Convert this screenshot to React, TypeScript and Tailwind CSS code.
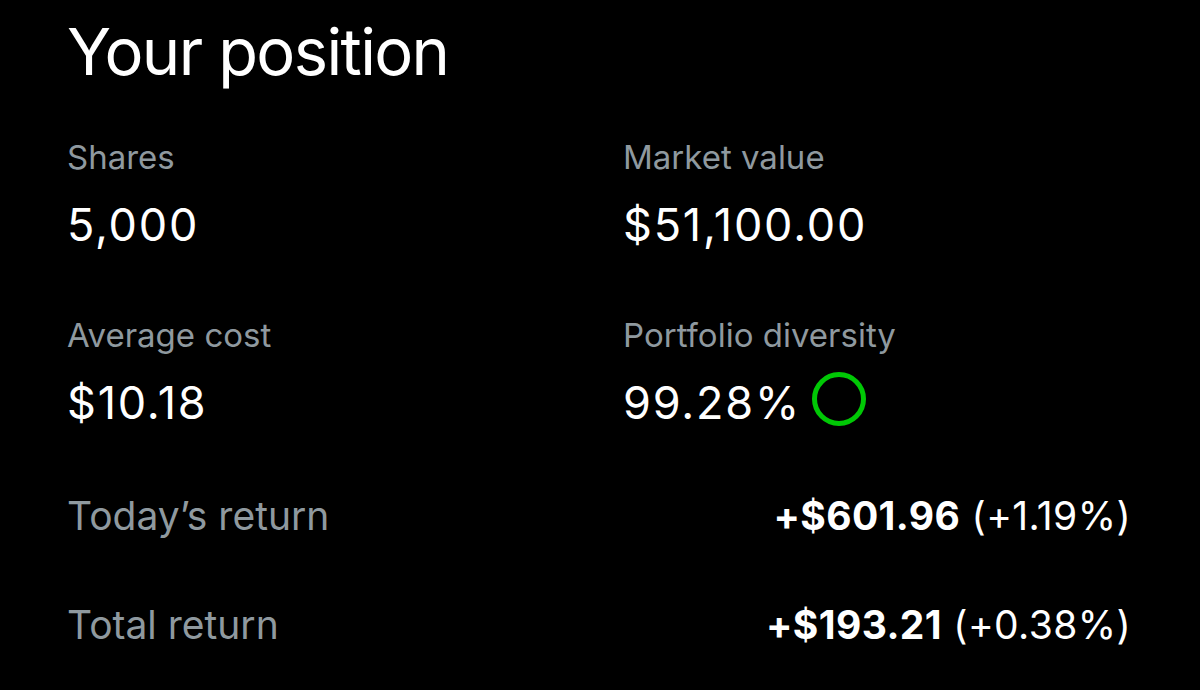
export default function App() {
  const stats = [
    [
      { label: "Shares", value: "5,000" },
      { label: "Market value", value: "$51,100.00" },
    ],
    [
      { label: "Average cost", value: "$10.18" },
      { label: "Portfolio diversity", value: "99.28%", ring: true },
    ],
  ];

  const returns = [
    { label: "Today’s return", amount: "+$601.96", pct: "(+1.19%)" },
    { label: "Total return", amount: "+$193.21", pct: "(+0.38%)" },
  ];

  return (
    <div
      className="h-[690px] w-[1200px] overflow-hidden bg-black pl-[67px] pr-[69px] pt-[16px] text-white"
      style={{ fontFamily: "Inter, 'Noto Sans', sans-serif" }}
    >
      <h1 className="text-[65px] leading-[72px] font-normal tracking-[-0.025em]">Your position</h1>

      <div className="mt-[49px] flex flex-col gap-[64px]">
        {stats.map((row, i) => (
          <div key={i} className="grid grid-cols-[556px_1fr]">
            {row.map((s) => (
              <div key={s.label}>
                <p className="text-[33px] leading-[40px] text-[#8f999f]">{s.label}</p>
                <div className="mt-[22px] flex h-[52px] items-center gap-[11px]">
                  <span className="text-[45px] leading-[52px] tracking-[0.04em]">{s.value}</span>
                  {s.ring && (
                    <span className="size-[54px] shrink-0 -translate-y-[4px] rounded-full border-[5px] border-[#00c805]" />
                  )}
                </div>
              </div>
            ))}
          </div>
        ))}
      </div>

      <div className="mt-[64px] flex flex-col gap-[63px]">
        {returns.map((r) => (
          <div key={r.label} className="flex items-center justify-between">
            <span className="text-[39px] leading-[46px] text-[#8f999f]">{r.label}</span>
            <span className="text-[39px] leading-[46px] tracking-[0.01em]">
              <span className="font-bold">{r.amount}</span> {r.pct}
            </span>
          </div>
        ))}
      </div>
    </div>
  );
}
